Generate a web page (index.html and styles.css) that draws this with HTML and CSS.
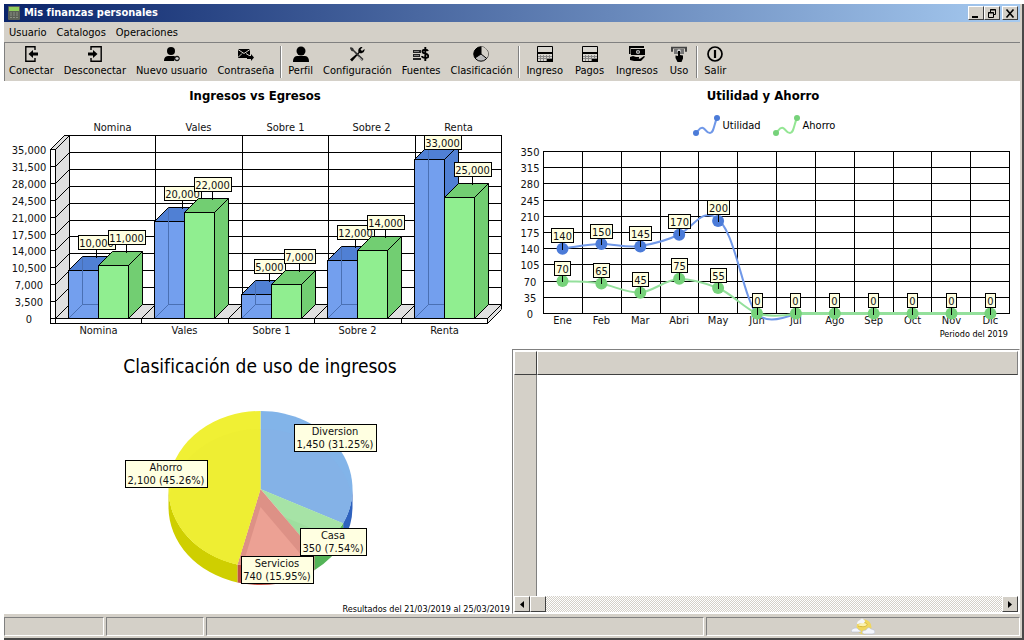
FILE: index.html
```html
<!DOCTYPE html>
<html lang="es">
<head>
<meta charset="utf-8">
<title>Mis finanzas personales</title>
<link rel="stylesheet" href="styles.css">
</head>
<body>
<div class="window">
  <header class="titlebar">
    <svg class="app-icon" width="12" height="14" viewBox="0 0 12 14" aria-hidden="true"><rect width="12" height="14" rx="1" fill="#5b6157"/><rect x="1" y="1" width="10" height="4" fill="#8fce5c"/><path d="M2 7h2M5 7h2M8 7h2M2 9h2M5 9h2M8 9h2M2 11.500h2M5 11.500h2M8 11.500h2" stroke="#8a9084"/></svg>
    <h1 class="title">Mis finanzas personales</h1>
    <div class="win-controls">
      <button class="win-btn" aria-label="Minimizar"><svg width="10" height="9" viewBox="0 0 10 9"><path d="M1 8h6" stroke="#000" stroke-width="2"/></svg></button>
      <button class="win-btn" aria-label="Restaurar"><svg width="10" height="9" viewBox="0 0 10 9"><path d="M3.500 3V.5h5v5H7M3 1h6M1.500 3.500h5v5h-5zM1 4h6" fill="none" stroke="#000"/></svg></button>
      <button class="win-btn win-close" aria-label="Cerrar"><svg width="10" height="9" viewBox="0 0 10 9"><path d="M1.500.5l7 8M8.500.5l-7 8" stroke="#000" stroke-width="1.600"/></svg></button>
    </div>
  </header>
  <nav class="menubar">
    <button class="menu-item">Usuario</button>
    <button class="menu-item">Catalogos</button>
    <button class="menu-item">Operaciones</button>
  </nav>
  <div class="toolbar" role="toolbar">
    <button class="tool"><svg class="ico" viewBox="0 0 16 16"><path d="M12 4V.8H2.800v14.400H12V12" fill="none" stroke="#000" stroke-width="1.400"/><path d="M5.500 8L10 4v2.500h5v3h-5V12z"/></svg>Conectar</button>
    <button class="tool"><svg class="ico" viewBox="0 0 16 16"><path d="M4 4V.8h10.200v14.400H4V12" fill="none" stroke="#000" stroke-width="1.400"/><path d="M10.500 8L6 4v2.500H1v3h5V12z"/></svg>Desconectar</button>
    <button class="tool"><svg class="ico" viewBox="0 0 16 16"><circle cx="7" cy="5" r="4"/><path d="M0 15c0-4 2-5 5-5h4c1.500 0 2 .5 2.500 1L10 15z"/><circle cx="13" cy="12.500" r="2.300" fill="#777" stroke="#000"/><path d="M13 11v3M11.500 12.500h3" stroke="#eee" stroke-width=".7"/></svg>Nuevo usuario</button>
    <button class="tool"><svg class="ico" viewBox="0 0 16 16"><path d="M0 3h12v6l-2 3H0z"/><path d="M0 3.500l6 4 6-4M0 11.500l4-4M12 10L8 7.500" stroke="#d4d0c8" fill="none"/><path d="M9 10h4V8l3 3.500-3 3.500v-2H9z"/></svg>Contraseña</button>
    <span class="sep"></span>
    <button class="tool"><svg class="ico" viewBox="0 0 16 16"><circle cx="8" cy="5" r="4.500"/><path d="M0 16c0-5 2-6 5-6h6c3 0 5 1 5 6z"/></svg>Perfil</button>
    <button class="tool"><svg class="ico" viewBox="0 0 16 16"><path d="M1 13.500L9.500 6.200c-1-3 1.500-5.700 4-5L11.500 3.500 13 5l2.500-2c.5 2.500-2 5-5 4L3 15.500z"/><path d="M1.500 1L4 2l1 2 9.500 9-1.500 2L4.500 5.500l-2-.5-1.500-2.500z" fill="#333"/><path d="M9.500 10.500l4 3.800" stroke="#aaa" stroke-width="1"/></svg>Configuración</button>
    <button class="tool"><svg class="ico" viewBox="0 0 16 16"><path d="M0 4h8v3H0zM0 8h7v3H0zM0 12h8v2H0z" fill="#222"/><path d="M1 5.500h5M1 9.500h5" stroke="#999" stroke-width=".8"/><path d="M15 5c-.5-1.500-5.500-2-5.500.5 0 3 5.800 1.500 5.800 4.500 0 2.800-6 2.300-6.300 0M12.300 1v14" fill="none" stroke="#000" stroke-width="1.900"/></svg>Fuentes</button>
    <button class="tool"><svg class="ico" viewBox="0 0 16 16"><circle cx="8" cy="8" r="7.200" fill="#bbb" stroke="#000"/><path d="M8 8V.8A7.200 7.200 0 0 0 2 12z"/><path d="M8 8l5.700 4.400A7.200 7.200 0 0 0 8 .8z" fill="#d4d0c8"/><path d="M8 .8V8l5.800 4.500M8 8l-6 4" fill="none" stroke="#000"/></svg>Clasificación</button>
    <span class="sep"></span>
    <button class="tool"><svg class="ico" viewBox="0 0 16 16"><use href="#calendar"/></svg>Ingreso</button>
    <button class="tool"><svg class="ico" viewBox="0 0 16 16"><g id="calendar"><path d="M.5.500h15v15H.5z" fill="#d8d6d0" stroke="#000"/><path d="M1 7h14" stroke="#000" stroke-width="2"/><path d="M3.500 9v6M6.500 9v6M9.500 9v6M12.500 9v6M1 10.500h14M1 12.500h14" stroke="#888" stroke-width="1"/><path d="M10 13h6v3h-6z"/></g></svg>Pagos</button>
    <button class="tool"><svg class="ico" viewBox="0 0 16 16"><path d="M0 0h15v2H1.500v6H0zM2 3h14v6H2z"/><circle cx="9" cy="6" r="2" fill="#ccc"/><path d="M9 4.800v2.400" stroke="#000"/><path d="M1 11l3-1 3 1h3v1.500H7l4 .3 4-2.800 1 .8-4 4.200H5l-4-1z"/></svg>Ingresos</button>
    <button class="tool"><svg class="ico" viewBox="0 0 16 16"><path d="M0 .7h16v5h-2V2.500H2v3.200H0z" fill="#444"/><path d="M3 3h10v5H3z" fill="#777"/><circle cx="8" cy="5" r="1.800" fill="#ddd"/><path d="M7 5h2v4l3 .5v3L10.500 16h-4L4.500 12v-2.500L7 10z"/></svg>Uso</button>
    <span class="sep"></span>
    <button class="tool"><svg class="ico" viewBox="0 0 16 16"><circle cx="8" cy="8" r="7" fill="none" stroke="#000" stroke-width="1.700"/><path d="M8 4v8" stroke="#000" stroke-width="2.200"/></svg>Salir</button>
  </div>
  <main class="panels">
    <section class="panel">
      <h2 class="chart-title">Ingresos vs Egresos</h2>
      <svg class="chart" id="bars" viewBox="4 111 508 234" role="img" aria-label="Ingresos vs Egresos"></svg>
    </section>
    <section class="panel">
      <h2 class="chart-title">Utilidad y Ahorro</h2>
      <div class="legend">
        <span class="key"><svg width="28" height="22" viewBox="0 0 28 22"><path d="M3 18C6 15 7 12 10 13s3 5 7 5 4-9 7-15" fill="none" stroke="#7098e8" stroke-width="2"/><circle cx="3" cy="18" r="3" fill="#4b7bd8"/><circle cx="24" cy="3" r="3" fill="#4b7bd8"/></svg>Utilidad</span>
        <span class="key"><svg width="28" height="22" viewBox="0 0 28 22"><path d="M3 18C6 15 7 12 10 13s3 5 7 5 4-9 7-15" fill="none" stroke="#94e694" stroke-width="2"/><circle cx="3" cy="18" r="3" fill="#76d27a"/><circle cx="24" cy="3" r="3" fill="#76d27a"/></svg>Ahorro</span>
      </div>
      <svg class="chart" id="lines" viewBox="512 139 508 188" role="img" aria-label="Utilidad y Ahorro"></svg>
      <p class="note note-period">Periodo del 2019</p>
    </section>
    <section class="panel">
      <h2 class="chart-title chart-title-large">Clasificación de uso de ingresos</h2>
      <svg class="chart" id="pie" viewBox="4 387 508 217" role="img" aria-label="Clasificación de uso de ingresos"></svg>
      <p class="note">Resultados del 21/03/2019 al 25/03/2019</p>
    </section>
    <section class="panel grid-panel">
      <table class="data-grid">
        <thead><tr><th class="row-head"></th><th></th></tr></thead>
        <tbody><tr><th class="row-head"></th><td></td></tr></tbody>
      </table>
      <div class="scrollbar">
        <button class="scroll-btn" aria-label="Desplazar a la izquierda"><svg width="4" height="7" viewBox="0 0 4 7"><path d="M4 0v7L0 3.500z"/></svg></button>
        <span class="thumb"></span>
        <span class="track"></span>
        <button class="scroll-btn" aria-label="Desplazar a la derecha"><svg width="4" height="7" viewBox="0 0 4 7"><path d="M0 0v7l4-3.500z"/></svg></button>
      </div>
    </section>
  </main>
  <footer class="statusbar">
    <span class="cell"></span><span class="cell"></span><span class="cell"></span>
    <span class="cell cell-icon"><svg width="24" height="17" viewBox="0 0 24 17" aria-hidden="true"><circle cx="13" cy="9" r="7.500" fill="#f0d75e"/><path d="M8 6c3-3 9-1 8 1s-5 2-9 1" fill="#fbf3b0" stroke="#d8b83c"/><path d="M6 6q0-3 3-4 2-3 4 0 2 1 0 3z" fill="#f4f6fa"/><path d="M0 13q1-3 4-3 2-1 4 2 2 0 2 2H1zM11 15q0-3 4-3 2-4 5-1 4 0 4 3 0 2-3 2h-8z" fill="#f4f6fc" stroke="#b6bccb" stroke-width=".6"/></svg></span>
  </footer>
</div>
<script src="charts.js"></script>
</body>
</html>
```
FILE: styles.css
```css
* { box-sizing: border-box; }
body {
  margin: 0;
  min-height: 100vh;
  padding: 4px 0 0 4px;
  display: flex;
  background: #fff;
  color: #000;
  font: 11px/14px "DejaVu Sans Condensed", "Noto Sans", sans-serif;
}
button { font: inherit; color: inherit; border: 0; background: none; padding: 0; margin: 0; }
h1, h2, p { margin: 0; }
.window {
  flex: 1;
  min-width: 0;
  display: flex;
  flex-direction: column;
  background: #d4d0c8;
  border-right: 2px solid #484848;
  border-bottom: 2px solid #484848;
}
.titlebar {
  display: flex;
  align-items: center;
  height: 18px;
  margin-right: 2px;
  padding: 0 2px 0 4px;
  gap: 4px;
  background: linear-gradient(90deg, #0a246a, #a6caf0);
}
.title { flex: 1; font-size: 11px; line-height: 18px; color: #fff; }
.win-controls { display: flex; }
.win-btn {
  display: flex;
  align-items: center;
  justify-content: center;
  width: 16px;
  height: 14px;
  background: #d4d0c8;
  border: 1px solid;
  border-color: #fff #404040 #404040 #fff;
}
.win-close { margin-left: 2px; }
.menubar { display: flex; height: 20px; padding: 2px 5px 0; gap: 10px; align-items: center; }
.toolbar {
  display: flex;
  align-items: flex-start;
  height: 39px;
  margin-right: 2px;
  padding: 3px 4px 0;
  border-top: 1px solid #808080;
  border-left: 1px solid #808080;
  gap: 10px;
}
.tool { display: flex; flex-direction: column; align-items: center; gap: 2px; white-space: nowrap; }
.sep ~ .sep ~ .tool { padding-right: 2px; }
.ico { width: 16px; height: 16px; display: block; }
.sep { width: 2px; height: 32px; margin: 0 -4px; border-left: 1px solid #808080; border-right: 1px solid #fff; }
.panels {
  flex: 1;
  display: grid;
  grid-template-columns: 1fr 1fr;
  grid-template-rows: auto 1fr;
  margin-right: 2px;
  background: #fff;
}
.panel { display: flex; flex-direction: column; min-width: 0; }
.chart-title { font-size: 13px; line-height: 30px; text-align: center; padding-right: 6px; }
.chart-title-large { font-size: 19px; line-height: 42px; font-weight: normal; padding: 0 0 0 4px; }
.chart { display: block; width: 100%; height: auto; }
.legend { display: flex; justify-content: center; align-items: center; gap: 12px; height: 28px; padding: 2px 4px 0 0; }
.key { display: flex; align-items: center; gap: 2px; }
.note { font-size: 9px; line-height: 10px; text-align: right; padding-right: 2px; }
.note-period { line-height: 14px; padding-right: 12px; }
.grid-panel {
  margin-top: 4px;
  padding: 1px;
  border: 1px solid;
  border-color: #808080 #fff #fff #808080;
}
.data-grid { flex: 1; display: flex; flex-direction: column; width: 100%; }
.data-grid thead { display: flex; }
.data-grid tbody { flex: 1; display: flex; }
.data-grid tr { flex: 1; display: flex; }
.data-grid th { padding: 0; background: #d4d0c8; border-right: 1px solid #808080; }
.data-grid thead th { height: 24px; border-bottom: 1px solid #404040; border-left: 1px solid #fff; border-top: 1px solid #fff; }
.data-grid thead .row-head { border-right: 1px solid #404040; }
.data-grid .row-head { width: 23px; }
.data-grid td { padding: 0; }
.data-grid th:last-child, .data-grid td { flex: 1; }
.scrollbar { display: flex; height: 16px; }
.scroll-btn, .thumb {
  display: flex;
  align-items: center;
  justify-content: center;
  width: 16px;
  background: #d4d0c8;
  border: 1px solid;
  border-color: #fff #404040 #404040 #fff;
}
.track { flex: 1; background: repeating-conic-gradient(#d4d0c8 0 25%, #fff 0 50%) 0 0 / 2px 2px; }
.statusbar { display: grid; grid-template-columns: 100fr 98fr 498fr 314fr; gap: 2px; padding: 3px 2px 2px 0; }
.cell { height: 19px; border: 1px solid; border-color: #808080 #fff #fff #808080; }
.cell-icon { display: flex; align-items: center; justify-content: center; }

.chart text { fill: #111; text-anchor: middle; }
.grid { fill: none; stroke: #000; stroke-width: 1; shape-rendering: crispEdges; }
.slant { fill: none; stroke: #000; }
.wall { fill: #e0e0e0; stroke: none; }
.tag { fill: #ffffe1; stroke: #000; shape-rendering: crispEdges; }
.bar { stroke: #000; }
.blue { fill: #739fee; }
.blue-dark { fill: #5080d4; }
.green { fill: #90ee90; }
.green-dark { fill: #72ce72; }
.hidden-edge { fill: none; stroke: #4a70b4; shape-rendering: crispEdges; }
.line-blue { fill: none; stroke: #7098e8; stroke-width: 2; }
.line-green { fill: none; stroke: #94e09c; stroke-width: 2; }
.line-base { stroke-width: 3; }
.dot-blue { fill: #4b7bd8; }
.dot-green { fill: #76d27a; }
```
FILE: charts.js
```js
const line = (cls, d) => `<path class="${cls}" d="${d}"/>`;
const label = (x, y, t) => `<text x="${x}" y="${y}">${t}</text>`;
const px = v => Math.floor(v) + 0.5;
const tag = (x, top, w, t) =>
  `<rect class="tag" x="${px(x - w / 2)}" y="${px(top)}" width="${w}" height="14"/>` + label(px(x), px(top) + 11, t);

function drawBars() {
  const names = ["Nomina", "Vales", "Sobre 1", "Sobre 2", "Renta"];
  const income = [10000, 20000, 5000, 12000, 33000];
  const spent = [11000, 22000, 7000, 14000, 25000];
  const base = 318.5, height = 169, depth = 14, step = 86.6, barW = 30;
  let s = line("wall", "M50.500 149.500l14-14h5v169l432 0v5l-14 14h-437z");
  s += `<path d="M69.500 135.500h432v169h-432z" fill="#fff"/><path d="M50.500 149.500h5v169h432v5h-437z" fill="#fff"/>`;
  for (let i = 0; i <= 10; i++) {
    const y = px(base - height * i / 10);
    s += line("grid", `M50 ${y}h5M69 ${y - depth}h432`) + line("slant", `M55.500 ${y}l14-14`);
    s += label(29, y + 4, (i * 3500).toLocaleString("en-US"));
  }
  s += line("grid", "M50.500 149v174h437v-5M55.500 149v174M50 318.500h437M69.500 135v169M64 135.500h5M501.500 135v174");
  s += line("slant", "M50.500 149.500l14-14M487.500 318.500l14-14M487.500 323.500l14-14");
  names.forEach((n, k) => {
    const x = px(69 + step * k);
    if (k) s += line("grid", `M${x} 135v169M${x - depth} 318v5`) + line("slant", `M${x - depth} 318.500l14-14`);
    s += label(px(112 + step * k), 131, n) + label(px(98 + step * k), 334, n);
  });
  const block = (x, v, c) => {
    const y = px(base - height * v / 35000), h = base - y;
    let b = `<path class="bar ${c}-dark" d="M${x} ${y}l14-14h${barW}l-14 14z"/>` +
      `<path class="bar ${c}-dark" d="M${x + barW} ${y}l14-14v${h}l-14 14z"/>` +
      `<rect class="bar ${c}" x="${x}" y="${y}" width="${barW}" height="${h}"/>`;
    if (c === "blue") b += line("hidden-edge", `M${x + 14} ${y - 14}v${h}M${x} ${base}l14-14h16`);
    const t = v.toLocaleString("en-US"), w = t.length > 5 ? 37 : 31;
    const mid = x + barW / 2 + 13, top = Math.max(y - 35, 135);
    b += line("grid", `M${mid} ${top + 14}V${y - 13}`);
    return b + tag(mid, top, w, t);
  };
  names.forEach((n, k) => {
    const x = px(68 + step * k);
    s += block(x, income[k], "blue") + block(x + barW, spent[k], "green");
  });
  document.getElementById("bars").innerHTML = s;
}

function drawLines() {
  const months = ["Ene", "Feb", "Mar", "Abri", "May", "Jun", "Jul", "Ago", "Sep", "Oct", "Nov", "Dic"];
  const profit = [140, 150, 145, 170, 200];
  const saving = [70, 65, 45, 75, 55, 0, 0, 0, 0, 0, 0, 0];
  const X = k => 562.5 + 38.9 * k, Y = v => 313.5 - 162 * v / 350;
  let s = "";
  for (let i = 0; i <= 10; i++) {
    const y = px(Y(i * 35));
    s += line("grid", `M543 ${y}h467`) + label(530, y + 4, i * 35);
  }
  for (let k = 0; k <= 12; k++) s += line("grid", `M${px(543.5 + 38.84 * k)} 151v163`);
  months.forEach((m, k) => { s += label(X(k), 324, m); });
  const mark = (k, v, c) => {
    const w = [10, 16, 22][String(v).length - 1];
    return `<circle class="dot-${c}" cx="${X(k)}" cy="${Y(v)}" r="6"/>` +
      line("grid", `M${px(X(k))} ${Y(v) - 6}v7`) + tag(X(k), Y(v) - 20, w, v);
  };
  s += line("line-blue", "M562 248.500C575 247 588 244 601 244S627 248 640 246S668 240 679 234.500C695 226 700 210 715 217C735 227 742 296 757 314C765 321 775 322 796 313.500");
  profit.forEach((v, k) => { s += mark(k, v, "blue"); });
  s += line("line-green", "M562 281C575 282 588 281 601 283.500S627 293 640 292.500S666 279 679 279S705 283 718 288S744 308 757 313.500C770 317 783 316 796 313.500");
  s += line("line-green line-base", "M796 313.500H990");
  saving.forEach((v, k) => { s += mark(k, v, "green"); });
  document.getElementById("lines").innerHTML = s;
}

function drawPie() {
  const cx = 260.5, cy = 489, rx = 92, ry = 78, depth = 18;
  const rim = deg => {
    const a = deg * Math.PI / 180, t = Math.atan2(Math.sin(a) / rx, Math.cos(a) / ry);
    return [cx + rx * Math.sin(t), cy - ry * Math.cos(t)];
  };
  const slices = [
    { from: 0, to: 112.5, top: "#82b4e9", edge: "#84b2e7", side: "#2f62be" },
    { from: 112.5, to: 139.6, top: "#a6e3a6", edge: "#9fde9f", side: "#54b458" },
    { from: 139.6, to: 197, top: "#dd9186", edge: "#eca194", side: "#c25046" },
    { from: 197, to: 360, top: "#f0f034", edge: "#eeee33", side: "#cfcf00" }
  ];
  const wedge = (p, dy) => {
    const [x1, y1] = rim(p.from), [x2, y2] = rim(p.to);
    return `M${cx} ${cy + dy}L${x1} ${y1 + dy}A${rx} ${ry} 0 0 1 ${x2} ${y2 + dy}z`;
  };
  let s = "";
  slices.forEach((p, i) => {
    const a = Math.max(p.from, 90), b = Math.min(p.to, 270);
    const [x1, y1] = rim(a), [x2, y2] = rim(b);
    s += `<path fill="${p.side}" d="M${x1} ${y1}A${rx} ${ry} 0 0 1 ${x2} ${y2}v${depth}A${rx} ${ry} 0 0 0 ${x1} ${y1 + depth}z"/>`;
    s += `<clipPath id="slice${i}"><path d="${wedge(p, 0)}"/></clipPath>`;
  });
  slices.forEach((p, i) => {
    s += `<path fill="${p.top}" d="${wedge(p, 0)}"/><path fill="${p.edge}" d="${wedge(p, depth)}" clip-path="url(#slice${i})"/>`;
  });
  [[294, 424, 82, "Diversion", "1,450 (31.25%)"], [125, 460, 82, "Ahorro", "2,100 (45.26%)"],
   [300, 528, 66, "Casa", "350 (7.54%)"], [241, 556, 72, "Servicios", "740 (15.95%)"]].forEach(([x, y, w, a, b]) => {
    s += `<rect class="tag" x="${x + 0.5}" y="${y + 0.5}" width="${w}" height="27"/>` +
      label(x + w / 2, y + 11, a) + label(x + w / 2, y + 24, b);
  });
  document.getElementById("pie").innerHTML = s;
}

drawBars();
drawLines();
drawPie();
```
